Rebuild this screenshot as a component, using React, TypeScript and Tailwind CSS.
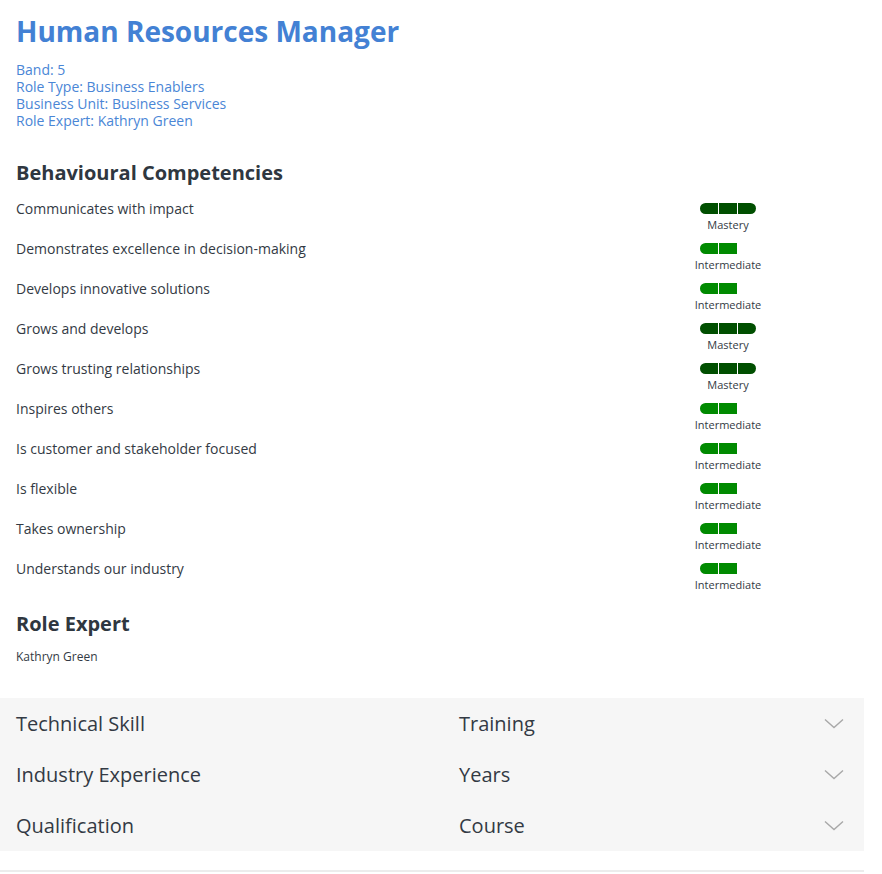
import React from "react";

type Level = "Mastery" | "Intermediate";

const competencies: { name: string; level: Level }[] = [
  { name: "Communicates with impact", level: "Mastery" },
  { name: "Demonstrates excellence in decision-making", level: "Intermediate" },
  { name: "Develops innovative solutions", level: "Intermediate" },
  { name: "Grows and develops", level: "Mastery" },
  { name: "Grows trusting relationships", level: "Mastery" },
  { name: "Inspires others", level: "Intermediate" },
  { name: "Is customer and stakeholder focused", level: "Intermediate" },
  { name: "Is flexible", level: "Intermediate" },
  { name: "Takes ownership", level: "Intermediate" },
  { name: "Understands our industry", level: "Intermediate" },
];

function LevelBar({ level }: { level: Level }) {
  const mastery = level === "Mastery";
  return (
    <div className="flex flex-col items-center">
      <div className="mt-[4px] flex h-[11px] w-[56px] gap-[1px]">
        <div
          className={
            mastery
              ? "h-full w-[18px] rounded-l-full bg-[#004f00]"
              : "h-full w-[18px] rounded-l-full bg-[#008a00]"
          }
        />
        <div
          className={
            mastery ? "h-full w-[18px] bg-[#004f00]" : "h-full w-[18px] bg-[#008a00]"
          }
        />
        <div
          className={
            mastery
              ? "h-full w-[18px] rounded-r-full bg-[#004f00]"
              : "h-full w-[18px] rounded-r-full bg-white"
          }
        />
      </div>
      <div className="mt-[4px] text-[11px] leading-[14px] text-[#333a44]">{level}</div>
    </div>
  );
}

function Chevron() {
  return (
    <svg width="20" height="11" viewBox="0 0 20 11" className="mr-[20px]">
      <path d="M1 1.5 L10 9.5 L19 1.5" fill="none" stroke="#a8a8a8" strokeWidth="1.4" />
    </svg>
  );
}

export default function App() {
  const rows = [
    ["Technical Skill", "Training"],
    ["Industry Experience", "Years"],
    ["Qualification", "Course"],
  ];
  return (
    <div
      className="w-[864px] bg-white text-[#333a44]"
      style={{ fontFamily: '"Open Sans", "Noto Sans", sans-serif' }}
    >
      <div className="px-4 pt-[13px]">
        <h1 className="text-[28px] font-bold leading-[36px] text-[#4381d4]">
          Human Resources Manager
        </h1>
        <div className="mt-[12px] text-[14px] leading-[17px] text-[#4a86d6]">
          <div>Band: 5</div>
          <div>Role Type: Business Enablers</div>
          <div>Business Unit: Business Services</div>
          <div>Role Expert: Kathryn Green</div>
        </div>
        <h2 className="mt-[30px] text-[20px] font-bold leading-[28px] text-[#2f3740]">
          Behavioural Competencies
        </h2>
        <div className="mt-[12px]">
          {competencies.map((c) => (
            <div key={c.name} className="flex h-[40px] items-start">
              <div className="flex-1 text-[14px] leading-[20px]">{c.name}</div>
              <div className="mr-[80px] flex w-[80px] justify-center">
                <LevelBar level={c.level} />
              </div>
            </div>
          ))}
        </div>
        <h2 className="mt-[11px] text-[20px] font-bold leading-[28px] text-[#2f3740]">
          Role Expert
        </h2>
        <div className="mt-[11px] text-[12px] leading-[16px]">Kathryn Green</div>
      </div>
      <div className="mt-[33px] bg-[#f6f6f6]">
        {rows.map(([a, b]) => (
          <div key={a} className="flex h-[51px] items-center pl-4 text-[20px] text-[#333a44]">
            <div className="w-[443px]">{a}</div>
            <div className="flex-1">{b}</div>
            <Chevron />
          </div>
        ))}
      </div>
      <div className="h-[19px]" />
      <div className="h-[2px] bg-[#ececec]" />
    </div>
  );
}
